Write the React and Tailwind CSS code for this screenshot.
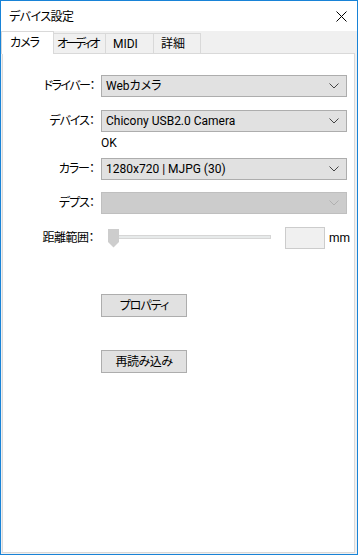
import React from "react";

const font = "font-['Roboto','Noto_Sans_CJK_JP',sans-serif] [font-feature-settings:'palt']";

function Chevron({ disabled }) {
  return (
    <svg width="10" height="6" viewBox="0 0 10 6" className="shrink-0">
      <path d="M0.5 0.5 L5 5 L9.5 0.5" fill="none" stroke={disabled ? "#b0b0b0" : "#444"} strokeWidth="1" />
    </svg>
  );
}

function Select({ value, disabled }) {
  return (
    <div
      className={`flex h-[22px] w-[246px] items-center justify-between border pl-[4px] pr-[7px] ${
        disabled ? "border-[#bfbfbf] bg-[#cccccc]" : "border-[#adadad] bg-[#e1e1e1]"
      }`}
    >
      <span className="whitespace-nowrap text-[12px] leading-[14px] text-black">{value}</span>
      <Chevron disabled={disabled} />
    </div>
  );
}

function Row({ label, children, className = "", labelClass = "tracking-[-1px]" }) {
  return (
    <div className={`flex items-center ${className}`}>
      <div className={`w-[95px] whitespace-nowrap pr-[4px] text-right text-[12px] leading-[14px] text-black ${labelClass}`}>{label}</div>
      <div className="ml-[3px]">{children}</div>
    </div>
  );
}

const tabBase = "flex h-[20px] items-center whitespace-nowrap border-r border-t border-[#d9d9d9] bg-[#f0f0f0] pt-[1px] text-[12px] leading-[14px] text-black";

export default function App() {
  return (
    <div className={`flex h-[555px] w-[358px] flex-col border border-[#1883d7] bg-white ${font}`}>
      {/* title bar */}
      <div className="flex h-[30px] items-center justify-between bg-white pl-[8px] pr-[10px] pt-[1px]">
        <span className="text-[12px] leading-[14px] tracking-[-0.5px] text-black">デバイス設定</span>
        <svg width="11" height="11" viewBox="0 0 11 11">
          <path d="M0.5 0.5 L10.5 10.5 M10.5 0.5 L0.5 10.5" stroke="#000" strokeWidth="1" />
        </svg>
      </div>
      {/* body */}
      <div className="flex flex-1 flex-col bg-[#f0f0f0] pb-[1px] pr-[2px]">
        {/* tabs */}
        <div className="flex h-[22px] items-end">
          <div className="relative z-10 -mb-px flex h-[23px] w-[53px] items-center whitespace-nowrap border-x border-t border-[#d9d9d9] bg-white pl-[8px] text-[12px] leading-[14px] tracking-[-1px] text-black">
            カメラ
          </div>
          <div className={`${tabBase} w-[52px] overflow-hidden pl-[3px] tracking-[-2.5px]`}>オーディオ</div>
          <div className={`${tabBase} w-[48px] pl-[7px]`}>MIDI</div>
          <div className={`${tabBase} w-[47px] pl-[7px]`}>詳細</div>
        </div>
        {/* panel */}
        <div className="ml-px flex flex-1 flex-col border border-[#d9d9d9] bg-white pt-[21px]">
          <Row label="ドライバー：" labelClass="tracking-[-1.5px]">
            <Select value="Webカメラ" />
          </Row>
          <Row label="デバイス：" className="mt-[13px]">
            <Select value="Chicony USB2.0 Camera" />
          </Row>
          <div className="mt-[3px] h-[16px] pl-[98px] text-[12px] leading-[16px] text-black">OK</div>
          <Row label="カラー：" className="mt-[7px]">
            <Select value="1280x720 | MJPG (30)" />
          </Row>
          <Row label="デプス：" className="mt-[12px]">
            <Select value="" disabled />
          </Row>
          <Row label="距離範囲：" className="mt-[13px]" labelClass="tracking-[-0.5px]">
            <div className="flex items-center">
              <div className="relative h-[22px] w-[170px]">
                <div className="absolute left-[7px] right-0 top-[8px] h-[4px] border border-[#d6d6d6] bg-[#e7eaea]" />
                <svg className="absolute left-[7px] top-[2px]" width="12" height="19" viewBox="0 0 12 19">
                  <path d="M0 0 H11 V13 L5.5 18.5 L0 13 Z" fill="#cdcdcd" />
                </svg>
              </div>
              <div className="ml-[14px] h-[22px] w-[40px] border border-[#cccccc] bg-[#f0f0f0]" />
              <span className="ml-[4px] text-[12px] leading-[14px] text-black">mm</span>
            </div>
          </Row>
          <div className="ml-[98px] mt-[45px] flex h-[23px] w-[86px] items-center justify-center border border-[#adadad] bg-[#e1e1e1] text-[12px] leading-[14px] tracking-[-1px] text-black">
            プロパティ
          </div>
          <div className="ml-[98px] mt-[33px] flex h-[23px] w-[86px] items-center justify-center border border-[#adadad] bg-[#e1e1e1] text-[12px] leading-[14px] tracking-[-0.5px] text-black">
            再読み込み
          </div>
        </div>
      </div>
    </div>
  );
}
